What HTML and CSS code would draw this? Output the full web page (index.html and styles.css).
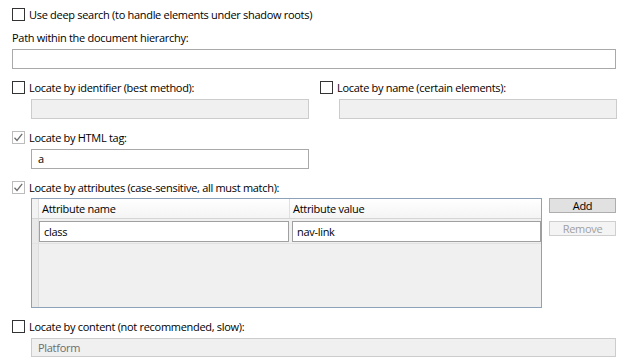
FILE: index.html
```html
<!DOCTYPE html>
<html>
<head>
<meta charset="utf-8">
<link rel="stylesheet" href="styles.css">
</head>
<body>
<div class="form">
  <label class="check-row"><span class="box"></span><span>Use deep search (to handle elements under shadow roots)</span></label>

  <div class="label row-path">Path within the document hierarchy:</div>
  <div class="field field-full"></div>

  <div class="two-col">
    <div class="col">
      <label class="check-row"><span class="box"></span><span>Locate by identifier (best method):</span></label>
      <div class="field indent disabled"></div>
    </div>
    <div class="col">
      <label class="check-row"><span class="box"></span><span>Locate by name (certain elements):</span></label>
      <div class="field indent disabled"></div>
    </div>
  </div>

  <div class="section">
    <label class="check-row"><span class="box checked"><svg viewBox="0 0 13 13" width="13" height="13"><path d="M2.5 6.8 L5 9.5 L10.2 2.8" fill="none" stroke="#6e6e6e" stroke-width="1.3"/></svg></span><span>Locate by HTML tag:</span></label>
    <div class="field indent half"><span class="val">a</span></div>
  </div>

  <div class="section">
    <label class="check-row"><span class="box checked"><svg viewBox="0 0 13 13" width="13" height="13"><path d="M2.5 6.8 L5 9.5 L10.2 2.8" fill="none" stroke="#6e6e6e" stroke-width="1.3"/></svg></span><span>Locate by attributes (case-sensitive, all must match):</span></label>
    <div class="attr-area">
      <div class="table">
        <div class="thead">
          <div class="rh"></div>
          <div class="th th-name">Attribute name</div>
          <div class="th th-value">Attribute value</div>
        </div>
        <div class="trow">
          <div class="rh"></div>
          <div class="cell cell-name"><span class="val">class</span></div>
          <div class="cell cell-value"><span class="val">nav-link</span></div>
        </div>
        <div class="tbody-rest"><div class="rh"></div></div>
      </div>
      <div class="buttons">
        <button class="btn btn-add">Add</button>
        <button class="btn btn-remove" disabled>Remove</button>
      </div>
    </div>
  </div>

  <div class="section">
    <label class="check-row"><span class="box"></span><span>Locate by content (not recommended, slow):</span></label>
    <div class="field indent wide disabled"><span class="val gray">Platform</span></div>
  </div>
</div>
</body>
</html>
```

FILE: styles.css
```css
html, body {
  margin: 0;
  padding: 0;
  background: #ffffff;
}
body {
  font-family: "Open Sans", "Noto Sans", "Liberation Sans", sans-serif;
  font-size: 11px;
  font-weight: 500;
  letter-spacing: -0.3px;
  color: #000;
  width: 624px;
  height: 363px;
  overflow: hidden;
}
.form {
  padding: 8px 8px 0 12px;
}
.check-row {
  display: flex;
  align-items: center;
  height: 13px;
  gap: 4px;
  line-height: 13px;
  white-space: nowrap;
}
.box {
  box-sizing: border-box;
  width: 13px;
  height: 13px;
  border: 1px solid #333333;
  background: #fff;
  flex: none;
  position: relative;
}
.box.checked {
  border-color: #bcbcbc;
}
.box.checked svg {
  position: absolute;
  left: -1px;
  top: -1px;
}
.label {
  line-height: 14px;
  height: 14px;
}
.row-path {
  margin-top: 10px;
}
.field {
  box-sizing: border-box;
  height: 20px;
  border: 1px solid #a9a9a9;
  background: #fff;
  display: flex;
  align-items: center;
  padding-left: 6px;
}
.field-full {
  margin-top: 4px;
  width: 604px;
}
.field.disabled {
  background: #f0f0f0;
  border-color: #cccccc;
}
.indent {
  margin-left: 19px;
  margin-top: 5px;
}
.two-col {
  display: grid;
  grid-template-columns: 308px 296px;
  margin-top: 12px;
}
.two-col .field {
  width: 278px;
}
.section {
  margin-top: 12px;
}
.half {
  width: 278px;
}
.wide {
  width: 585px;
  height: 19px;
}
.val {
  line-height: 14px;
}
.gray {
  color: #6d6d6d;
}
.attr-area {
  display: flex;
  gap: 7px;
  margin-left: 19px;
  margin-top: 4px;
}
.table {
  box-sizing: border-box;
  width: 511px;
  height: 110px;
  border: 1px solid #8da2b8;
  background: #f0f0f0;
  display: flex;
  flex-direction: column;
}
.rh {
  width: 6px;
  flex: none;
  background: #e9e9e9;
  border-right: 1px solid #dcdcdc;
}
.thead {
  display: flex;
  height: 19px;
  flex: none;
  background: linear-gradient(#ffffff, #f4f4f4);
  border-bottom: 1px solid #d5d5d5;
}
.thead .rh {
  background: #f3f3f3;
}
.th {
  display: flex;
  align-items: center;
  padding-left: 3px;
  box-sizing: border-box;
}
.th-name {
  width: 251px;
  border-right: 1px solid #e0e0e0;
}
.th-value {
  flex: 1;
}
.trow {
  display: flex;
  height: 25px;
  flex: none;
  background: #f0f0f0;
  border-bottom: 1px solid #e2e2e2;
  box-sizing: border-box;
}
.cell {
  box-sizing: border-box;
  height: 21px;
  margin-top: 2px;
  border: 1px solid #a0a0a0;
  background: #fff;
  display: flex;
  align-items: center;
  padding-left: 4px;
}
.cell-name {
  width: 250px;
}
.cell-value {
  width: 249px;
  margin-left: 3px;
}
.tbody-rest {
  flex: 1;
  display: flex;
}
.buttons {
  display: flex;
  flex-direction: column;
  gap: 8px;
}
.btn {
  box-sizing: border-box;
  width: 67px;
  height: 15px;
  padding: 0;
  font-family: inherit;
  font-size: 11px;
  font-weight: inherit;
  letter-spacing: inherit;
  line-height: 13px;
  color: #000;
  background: #e1e1e1;
  border: 1px solid #adadad;
}
.btn-remove {
  color: #a0a0a0;
  background: #f4f4f4;
  border-color: #cfcfcf;
}
```
